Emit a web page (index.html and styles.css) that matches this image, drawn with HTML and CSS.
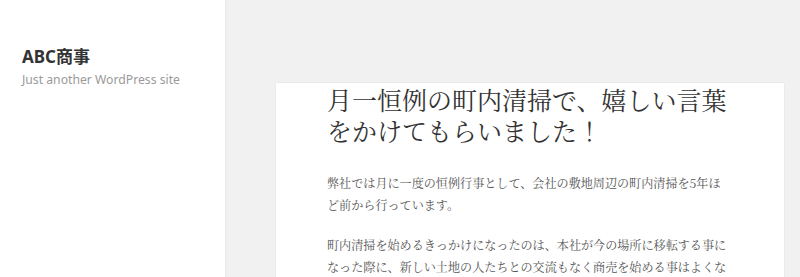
FILE: index.html
```html
<!DOCTYPE html>
<html lang="ja">
<head>
    <meta charset="UTF-8">
    <meta name="viewport" content="width=device-width, initial-scale=1.0">
    <title>ABC商事 | Just another WordPress site</title>
    <link rel="stylesheet" href="styles.css">
</head>
<body>

<div class="site">
    <aside class="sidebar">
        <header class="site-header">
            <p class="site-title">ABC商事</p>
            <p class="site-description">Just another WordPress site</p>
        </header>
    </aside>

    <main class="site-main">
        <article class="post">
            <h1 class="entry-title">月一恒例の町内清掃で、嬉しい言葉をかけてもらいました！</h1>
            <div class="entry-content">
                <p>弊社では月に一度の恒例行事として、会社の敷地周辺の町内清掃を5年ほど前から行っています。</p>
                <p>町内清掃を始めるきっかけになったのは、本社が今の場所に移転する事になった際に、新しい土地の人たちとの交流もなく商売を始める事はよくないと考えたからです。</p>
            </div>
        </article>
    </main>
</div>

</body>
</html>
```

FILE: styles.css
```css
* {
    margin: 0;
    padding: 0;
    box-sizing: border-box;
}

html, body {
    height: 100%;
}

body {
    background-color: #f1f1f1;
    color: #333;
    font-family: "Noto Sans", "Noto Sans CJK JP", sans-serif;
    overflow: hidden;
}

.site {
    display: flex;
    min-height: 100%;
}

/* サイドバー */
.sidebar {
    width: 225px;
    flex-shrink: 0;
    background-color: #fff;
    box-shadow: 0 0 1px rgba(0, 0, 0, 0.15);
}

.site-header {
    padding: 45px 22px 0;
}

.site-title {
    font-size: 17px;
    font-weight: 700;
    line-height: 24px;
    color: #333;
}

.site-description {
    margin-top: 1px;
    font-size: 12.2px;
    line-height: 20px;
    color: #9a9a9a;
}

/* 記事 */
.site-main {
    padding: 83px 0 0 51px;
}

.post {
    width: 508px;
    min-height: 300px;
    background-color: #fff;
    box-shadow: 0 0 1px rgba(0, 0, 0, 0.15);
    padding: 1px 55px 0 51px;
}

.entry-title {
    font-family: "Noto Serif CJK JP", "Liberation Serif", serif;
    font-size: 25px;
    font-weight: 400;
    line-height: 31px;
    color: #333;
}

.entry-content {
    margin-top: 26px;
    font-family: "Noto Serif CJK JP", "Liberation Serif", serif;
    font-size: 12.1px;
    line-height: 21.5px;
    color: #555;
}

.entry-content p {
    margin-bottom: 19px;
}
```
